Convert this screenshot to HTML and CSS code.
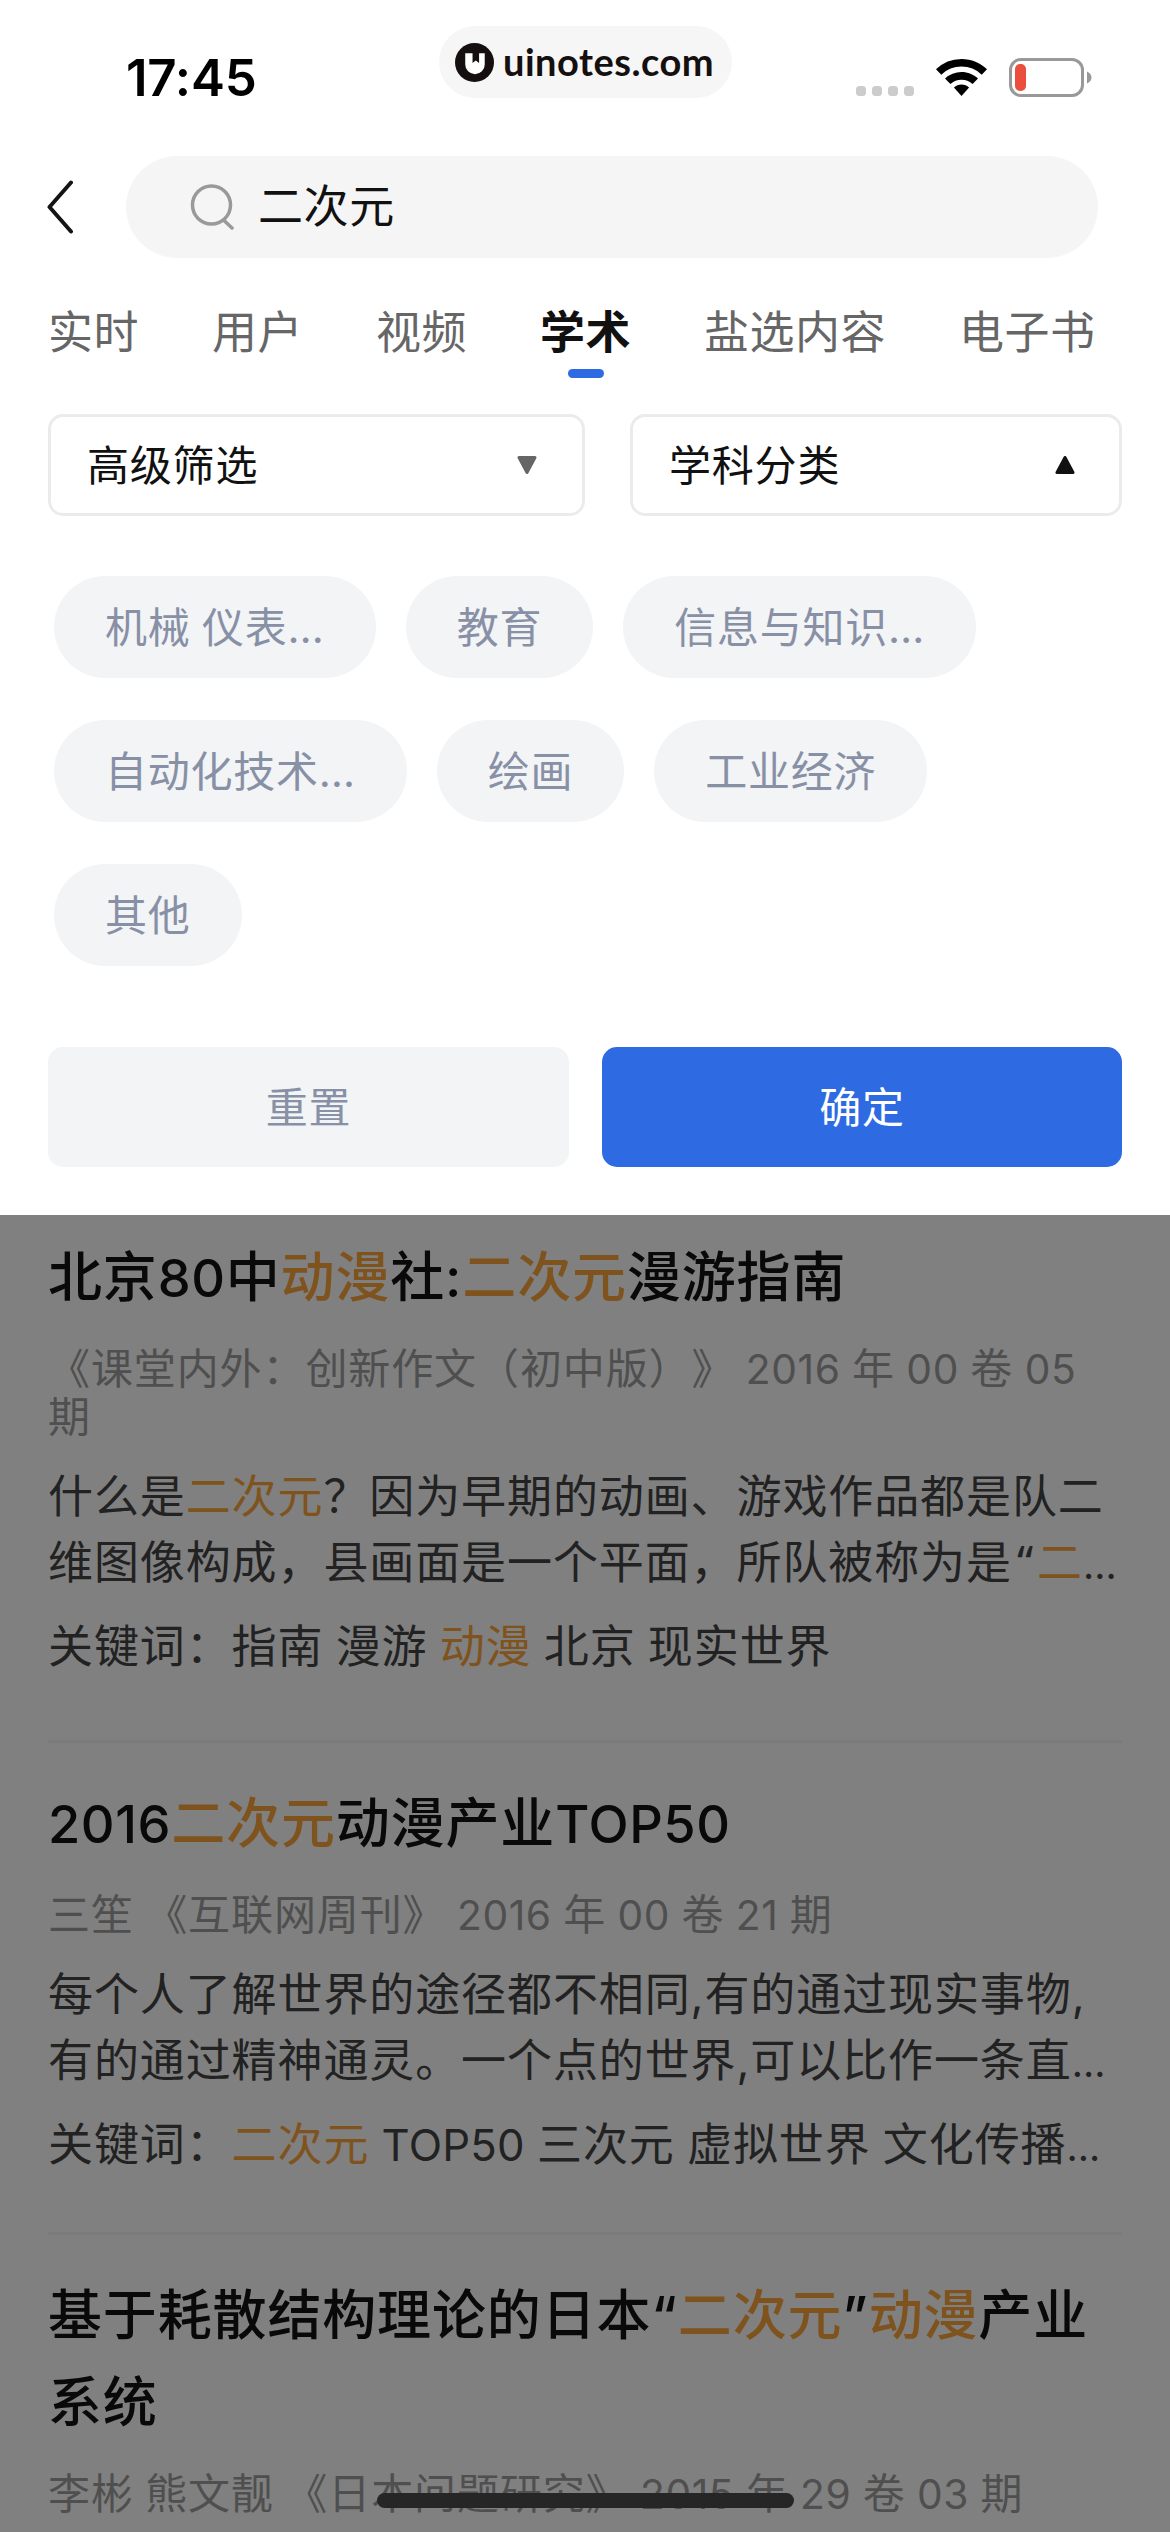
FILE: index.html
```html
<!DOCTYPE html>
<html lang="zh-CN">
<head>
<meta charset="utf-8">
<title>二次元 - 学术</title>
<link rel="stylesheet" href="styles.css">
</head>
<body>
<div class="screen">
  <section class="panel">
    <header class="status">
      <span class="time">17:45</span>
      <div class="brand">
        <svg class="brand-logo" viewBox="0 0 40 40"><circle cx="20" cy="20" r="20" fill="#15100f"/><path d="M10.500 10.500H18V20.500L21.300 18L24.700 20.500V10.500H30.500V22a10 10 0 0 1-20 0z" fill="#fff"/></svg>
        <span class="brand-name">uinotes.com</span>
      </div>
      <div class="indicators">
        <span class="dots"><i></i><i></i><i></i><i></i></span>
        <svg class="wifi" viewBox="0 0 51 37"><path d="M25.500 0C35.400 0 44.400 3.900 51 10.300L45.700 15.700A28.800 28.800 0 0 0 5.300 15.700L0 10.300A36.600 36.600 0 0 1 25.500 0z"/><path d="M25.500 13C31.800 13 37.600 15.500 42 19.500L36.600 25A16.500 16.500 0 0 0 14.400 25L9 19.500A24.500 24.500 0 0 1 25.500 13z"/><path d="M25.500 25.500c2.900 0 5.600 1.100 7.600 3L25.500 37l-7.600-8.500c2-1.900 4.700-3 7.600-3z"/></svg>
        <svg class="battery" viewBox="0 0 83 39"><rect x="1.500" y="1.500" width="72" height="36" rx="10.500" fill="none" stroke="#999" stroke-width="3"/><rect x="6" y="6" width="11" height="27" rx="5" fill="#eb4e3d"/><path d="M78 13.500c6 2.500 6 9.500 0 12z" fill="#999"/></svg>
      </div>
    </header>

    <div class="search-row">
      <svg class="back" viewBox="0 0 26 54"><path d="M24 2.500L2.500 27L24 51.500" fill="none" stroke="#141414" stroke-width="4" stroke-linecap="round" stroke-linejoin="round"/></svg>
      <div class="search">
        <svg class="search-icon" viewBox="0 0 46 46"><circle cx="21.500" cy="21" r="19" fill="none" stroke="#999" stroke-width="3.500"/><path d="M34 36.500L42 44" stroke="#999" stroke-width="3.500" stroke-linecap="round"/></svg>
        <span>二次元</span>
      </div>
    </div>

    <nav class="tabs">
      <span class="tab">实时</span>
      <span class="tab">用户</span>
      <span class="tab">视频</span>
      <span class="tab active">学术</span>
      <span class="tab">盐选内容</span>
      <span class="tab">电子书</span>
    </nav>

    <div class="selects">
      <div class="select wide"><span>高级筛选</span><svg class="caret" viewBox="0 0 20 18"><path d="M2 1.500H18L10 16.500z" fill="#666" stroke="#666" stroke-width="3" stroke-linejoin="round"/></svg></div>
      <div class="select"><span>学科分类</span><svg class="caret" viewBox="0 0 20 18"><path d="M2 16.500H18L10 1.500z" fill="#111" stroke="#111" stroke-width="3" stroke-linejoin="round"/></svg></div>
    </div>

    <div class="chips">
      <span class="chip">机械 仪表…</span>
      <span class="chip">教育</span>
      <span class="chip">信息与知识…</span>
      <span class="chip">自动化技术…</span>
      <span class="chip">绘画</span>
      <span class="chip">工业经济</span>
      <span class="chip">其他</span>
    </div>

    <div class="actions">
      <span class="btn">重置</span>
      <span class="btn primary">确定</span>
    </div>
  </section>

  <main class="results">
    <article class="result">
      <h2>北京<span class="latin">80</span>中<em>动漫</em>社:<em>二次元</em>漫游指南</h2>
      <p class="meta">《课堂内外：创新作文（初中版）》 <span class="latin">2016</span> 年 <span class="latin">00</span> 卷 <span class="latin">05</span><br>期</p>
      <p class="desc">什么是<em>二次元</em>？因为早期的动画、游戏作品都是队二<br>维图像构成，县画面是一个平面，所队被称为是<span class="quote">“</span><em>二</em><span class="more">…</span></p>
      <p class="keys">关键词：指南 漫游 <em>动漫</em> 北京 现实世界</p>
    </article>
    <article class="result second">
      <h2><span class="latin">2016</span><em>二次元</em>动漫产业<span class="latin">TOP50</span></h2>
      <p class="meta">三笙 《互联网周刊》 <span class="latin">2016</span> 年 <span class="latin">00</span> 卷 <span class="latin">21</span> 期</p>
      <p class="desc">每个人了解世界的途径都不相同,有的通过现实事物,<br>有的通过精神通灵。一个点的世界,可以比作一条直<span class="more">…</span></p>
      <p class="keys">关键词：<em>二次元</em> <span class="latin">TOP50</span> 三次元 虚拟世界 文化传播<span class="more">…</span></p>
    </article>
    <article class="result last">
      <h2>基于耗散结构理论的日本“<em>二次元</em>”<em>动漫</em>产业<br>系统</h2>
      <p class="meta">李彬 熊文靓 《日本问题研究》 <span class="latin">2015</span> 年 <span class="latin">29</span> 卷 <span class="latin">03</span> 期</p>
    </article>
  </main>
  <div class="home-indicator"></div>
</div>
</body>
</html>
```

FILE: styles.css
```css
* { box-sizing: border-box; margin: 0; padding: 0; }

body {
  width: 1170px;
  height: 2532px;
  overflow: hidden;
  background: #808080;
  font-family: Inter, "Noto Sans CJK SC", sans-serif;
  color: #111;
  white-space: nowrap;
  text-spacing-trim: space-all;
}

svg { display: block; flex: none; }
em { font-style: normal; color: #7f531e; }

.screen { position: relative; height: 2532px; overflow: hidden; }
.panel { height: 1215px; background: #fff; }

/* status bar */
.status {
  display: grid;
  grid-template-columns: 439px 293px 1fr;
  height: 156px;
  padding-top: 26px;
}
.time {
  padding-left: 126px;
  font-size: 51px;
  font-weight: 600;
  line-height: 104px;
  letter-spacing: -0.2px;
  color: #000;
}
.brand {
  display: flex;
  align-items: center;
  gap: 9px;
  height: 72px;
  padding-left: 16px;
  border-radius: 36px;
  background: #f6f6f6;
}
.brand-logo { width: 39px; height: 39px; }
.brand-name { padding-bottom: 2px; font: 700 38px/70px Lato, sans-serif; letter-spacing: 0.5px; color: #15100f; }
.indicators {
  display: flex;
  align-items: flex-end;
  height: 71px;
  padding-left: 124px;
}
.dots { display: flex; gap: 6px; padding-bottom: 1px; }
.dots i { width: 10px; height: 10px; border-radius: 3.5px; background: #ccc; }
.wifi { width: 51px; height: 37px; margin: 0 22px 1px; }
.battery { width: 83px; height: 39px; }

/* search */
.search-row { display: flex; align-items: center; height: 102px; padding-left: 47px; }
.back { width: 26px; height: 54px; }
.search {
  display: flex;
  align-items: center;
  gap: 22px;
  width: 972px;
  height: 102px;
  margin-left: 53px;
  padding-left: 64px;
  border-radius: 51px;
  background: #f5f5f5;
  font-size: 45px;
  line-height: 104px;
  letter-spacing: 0.6px;
}
.search-icon { width: 46px; height: 46px; }

/* tabs */
.tabs {
  display: flex;
  gap: 73px;
  height: 156px;
  padding: 37px 0 0 48px;
  font-size: 45px;
  line-height: 76px;
  letter-spacing: 0.5px;
  color: #666;
}
.tab { height: 84px; }
.tab.active { font-weight: 600; color: #111; }
.tab.active::after {
  content: "";
  display: block;
  width: 36px;
  height: 9px;
  margin: -2px auto 0;
  border-radius: 5px;
  background: #2e6be2;
}

/* selects */
.selects { display: flex; justify-content: space-between; padding: 0 48px; }
.select {
  display: flex;
  align-items: center;
  justify-content: space-between;
  width: 492px;
  height: 102px;
  padding: 0 44px 0 36px;
  border: 3px solid #ebebeb;
  border-radius: 15px;
  font-size: 42px;
  line-height: 96px;
  letter-spacing: 0.8px;
}
.select span { padding-top: 1px; }
.select.wide { width: 537px; padding-right: 45px; }
.caret { width: 20px; height: 18px; }

/* chips */
.chips { display: flex; flex-wrap: wrap; gap: 42px 30px; padding: 60px 150px 0 54px; }
.chip {
  height: 102px;
  padding: 0 51px;
  border-radius: 51px;
  background: #f2f4f6;
  font-size: 42px;
  line-height: 104px;
  letter-spacing: 0.75px;
  word-spacing: -1px;
  color: #8890a6;
}

/* actions */
.actions { display: grid; grid-template-columns: 521px 520px; gap: 33px; padding: 81px 48px 0; }
.btn {
  height: 120px;
  border-radius: 15px;
  background: #f2f4f6;
  font-size: 42px;
  line-height: 121px;
  letter-spacing: 0.75px;
  text-align: center;
  color: #8890a6;
}
.btn.primary { background: #2e6be2; color: #fff; }

/* dimmed results */
.results { padding: 19px 48px 0; }
.result { padding-bottom: 60px; margin-bottom: 37px; border-bottom: 3px solid #7b7b7b; }
.result.second { padding-bottom: 54px; }
.result.last { border: 0; }
h2 { font-size: 54px; font-weight: 500; line-height: 87px; letter-spacing: 0.85px; color: #090909; }
.meta { margin-top: 24px; font-size: 42px; line-height: 48px; letter-spacing: 0.9px; word-spacing: -1.3px; color: #4f4f4f; }
.desc { margin-top: 23px; font-size: 45px; line-height: 66px; letter-spacing: 0.9px; color: #222; }
.keys { margin-top: 18px; font-size: 45px; line-height: 66px; letter-spacing: 0.9px; word-spacing: -1.3px; color: #222; }
.latin { font-size: 0.97em; letter-spacing: 0.6px; line-height: 1; }
.keys .latin { letter-spacing: 0.2px; }
.quote { padding: 0 3px 0 5px; font-family: "Noto Sans", sans-serif; line-height: 1; }
.more { font-size: 39px; line-height: 1; }

.home-indicator {
  position: absolute;
  left: 377px;
  top: 2493px;
  width: 417px;
  height: 15px;
  border-radius: 8px;
  background: #262626;
}
```
